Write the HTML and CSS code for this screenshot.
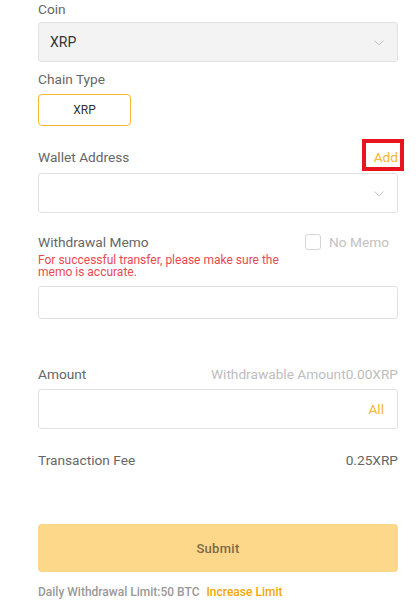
FILE: index.html
```html
<!DOCTYPE html>
<html lang="en">
<head>
  <meta charset="UTF-8">
  <title>Withdraw</title>
  <meta name="viewport" content="width=device-width, initial-scale=1.0">
  <link rel="stylesheet" href="styles.css">
</head>
<body>

  <form class="withdraw">

    <div class="label">Coin</div>
    <div class="field field-grey">
      <span class="field-value">XRP</span>
      <svg class="chevron" width="10" height="6" viewBox="0 0 10 6"><polyline points="0.5,0.5 5,5 9.5,0.5" fill="none" stroke="#c4c4c4" stroke-width="1"/></svg>
    </div>

    <div class="label label-chain">Chain Type</div>
    <div class="chain-btn">XRP</div>

    <div class="label label-row label-wallet">
      <span>Wallet Address</span>
      <span class="add-link">Add</span>
    </div>
    <div class="field">
      <span class="field-value"></span>
      <svg class="chevron" width="10" height="6" viewBox="0 0 10 6"><polyline points="0.5,0.5 5,5 9.5,0.5" fill="none" stroke="#c4c4c4" stroke-width="1"/></svg>
    </div>

    <div class="label label-row label-memo">
      <span>Withdrawal Memo</span>
      <label class="no-memo"><span class="checkbox"></span>No Memo</label>
    </div>
    <p class="memo-warning">For successful transfer, please make sure the memo is accurate.</p>
    <div class="field field-short"></div>

    <div class="label label-row label-amount">
      <span>Amount</span>
      <span class="hint">Withdrawable Amount0.00XRP</span>
    </div>
    <div class="field">
      <span class="field-value"></span>
      <span class="all-link">All</span>
    </div>

    <div class="label label-row label-fee">
      <span>Transaction Fee</span>
      <span class="fee">0.25XRP</span>
    </div>

    <button type="button" class="submit-btn">Submit</button>

    <div class="limit">Daily Withdrawal Limit:50 BTC <span class="limit-link">Increase Limit</span></div>

  </form>

</body>
</html>
```

FILE: styles.css
```css
body {
  margin: 0;
  padding: 0;
  background: #ffffff;
  font-family: Roboto, 'Noto Sans', sans-serif;
  color: #666666;
  overflow: hidden;
}

.withdraw {
  display: flex;
  flex-direction: column;
  padding: 0 22px 0 38px;
}

.label {
  font-size: 13.7px;
  line-height: 18px;
  height: 18px;
  color: #666666;
}

.label-row {
  display: flex;
  justify-content: space-between;
  align-items: center;
}

.label-chain {
  margin-top: 8px;
}

.label-wallet {
  margin-top: 22px;
}

.label-memo {
  margin-top: 20px;
}

.label-amount {
  margin-top: 46px;
}

.label-fee {
  margin-top: 22px;
}

.field {
  box-sizing: border-box;
  height: 40px;
  margin-top: 4px;
  border: 1px solid #e2e2e2;
  border-radius: 3px;
  background: #ffffff;
  display: flex;
  align-items: center;
  justify-content: space-between;
  padding: 0 13px 0 11px;
}

.field-grey {
  background: #f3f3f3;
}

.label-wallet + .field {
  margin-top: 7px;
}

.label-amount + .field {
  margin-top: 6px;
}

.field-short {
  height: 33px;
}

.field-value {
  font-size: 14px;
  color: #333333;
}

.chevron {
  margin-top: 1px;
}

.chain-btn {
  box-sizing: border-box;
  width: 93px;
  height: 32px;
  margin-top: 6px;
  border: 1px solid #f8b730;
  border-radius: 4px;
  display: flex;
  align-items: center;
  justify-content: center;
  font-size: 12px;
  color: #333333;
}

.add-link {
  display: inline-block;
  color: #f8b530;
  padding: 5px 2px 1px 8px;
  margin: -5px -2px -1px -8px;
  outline: 4px solid #e8141f;
  line-height: 18px;
}

.no-memo {
  display: flex;
  align-items: center;
  gap: 8px;
  margin-right: 9px;
  color: #c2c2c2;
}

.checkbox {
  box-sizing: border-box;
  width: 16px;
  height: 16px;
  border: 1px solid #d6d6d6;
  border-radius: 3px;
}

.memo-warning {
  margin: 3px 0 0 0;
  max-width: 260px;
  font-size: 12px;
  line-height: 12px;
  color: #e8494f;
}

.memo-warning + .field {
  margin-top: 8px;
}

.hint {
  color: #bdbdbd;
}

.all-link {
  font-size: 13.7px;
  color: #f8b530;
}

.fee {
  color: #666666;
}

.submit-btn {
  margin-top: 55px;
  height: 48px;
  border: none;
  border-radius: 4px;
  background: #fdd88b;
  color: #7c6a45;
  font-family: Roboto, sans-serif;
  font-size: 13px;
  font-weight: 500;
  letter-spacing: 0.3px;
  cursor: pointer;
}

.limit {
  margin-top: 12px;
  font-size: 12px;
  line-height: 16px;
  font-weight: 500;
  color: #999999;
}

.limit-link {
  margin-left: 4px;
  color: #f7a600;
}
```
